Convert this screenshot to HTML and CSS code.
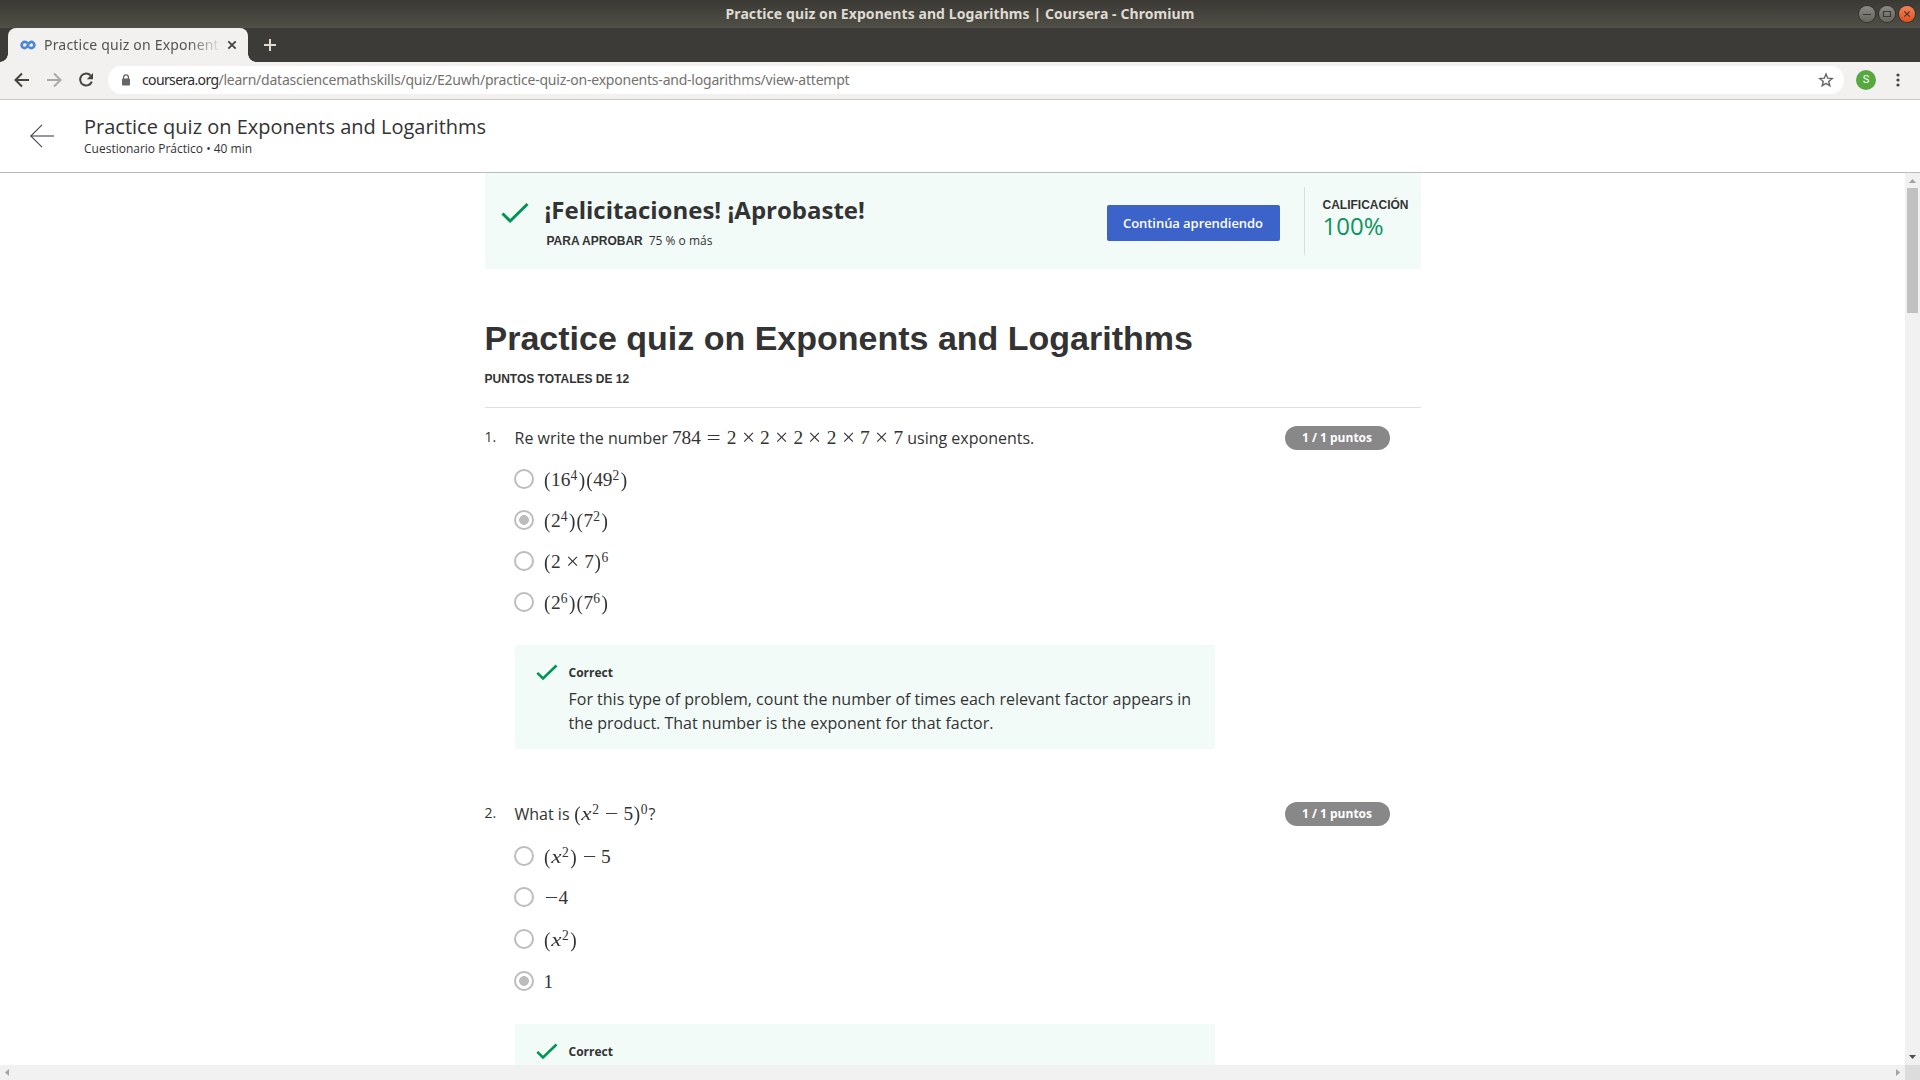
FILE: index.html
```html
<!DOCTYPE html>
<html lang="es">
<head>
<meta charset="utf-8">
<title>Practice quiz on Exponents and Logarithms | Coursera</title>
<link rel="stylesheet" href="styles.css">
</head>
<body>
<div class="window">
  <div class="titlebar">
    <span></span>
    <span class="window-title">Practice quiz on Exponents and Logarithms | Coursera - Chromium</span>
    <span class="window-buttons">
      <svg class="wbtn" viewBox="0 0 16 16"><path d="M4 8.5h8"/></svg>
      <svg class="wbtn" viewBox="0 0 16 16"><path d="M4.5 5.5h7v5h-7z"/></svg>
      <svg class="wbtn close" viewBox="0 0 16 16"><path d="M5.3 5.3l5.4 5.4M10.7 5.3l-5.4 5.4"/></svg>
    </span>
  </div>
  <div class="tabstrip">
    <div class="tab">
      <svg class="favicon" width="16" height="10" viewBox="0 0 16 10"><path d="M7.600 3.200C6.800 2.200 6 1.900 4.700 1.900a3.100 3.100 0 0 0 0 6.200C8 8.100 8 1.900 11.300 1.900a3.100 3.100 0 0 1 0 6.200C10 8.100 9.200 7.800 8.400 6.800"/></svg>
      <span class="tab-title">Practice quiz on Exponent</span>
      <svg class="tab-close" width="10" height="10" viewBox="0 0 10 10"><path d="M1.300 1.300l7.400 7.400M8.700 1.300l-7.400 7.400"/></svg>
    </div>
    <svg class="newtab" width="12" height="12" viewBox="0 0 12 12"><path d="M6 0v12M0 6h12"/></svg>
  </div>
  <div class="toolbar">
    <svg class="nav" width="24" height="24" viewBox="0 0 24 24"><path d="M19 12H6M12 5.500L5.500 12l6.500 6.500"/></svg>
    <svg class="nav off" width="24" height="24" viewBox="0 0 24 24"><path d="M5 12h13M12 5.500l6.500 6.500-6.500 6.500"/></svg>
    <svg class="nav" width="24" height="24" viewBox="0 0 24 24"><path d="M16.700 7.600A6 6 0 1 0 17.800 13.600"/><path class="solid" d="M19 5v6.200h-6.200z"/></svg>
    <div class="omnibox">
      <svg width="10" height="12" viewBox="0 0 10 12"><path d="M2.600 5V3.200a2.400 2.400 0 0 1 4.800 0V5" fill="none" stroke="#666" stroke-width="1.300"/><rect x="1" y="4.500" width="8" height="7" rx="1" fill="#666"/></svg>
      <span class="url"><b>coursera.org</b>/learn/datasciencemathskills/quiz/E2uwh/practice-quiz-on-exponents-and-logarithms/view-attempt</span>
      <svg width="16" height="16" viewBox="0 0 16 16"><path d="M8 2l1.700 4.200 4.500.3-3.500 2.900 1.100 4.400L8 11.400l-3.800 2.400 1.100-4.400-3.500-2.900 4.500-.3z" fill="none" stroke="#666" stroke-width="1.400"/></svg>
    </div>
    <span class="avatar">S</span>
    <svg width="4" height="14" viewBox="0 0 4 14" fill="#444"><circle cx="2" cy="2" r="1.600"/><circle cx="2" cy="7" r="1.600"/><circle cx="2" cy="12" r="1.600"/></svg>
  </div>

  <header class="page-header">
    <svg width="24" height="24" viewBox="0 0 24 24" fill="none" stroke="#45434f" stroke-width="1.100"><path d="M.800 12H24"/><path d="M12 .800L.800 12 12 23.200"/></svg>
    <div>
      <div class="page-title">Practice quiz on Exponents and Logarithms</div>
      <div class="page-sub">Cuestionario Práctico • 40 min</div>
    </div>
  </header>

  <div class="viewport">
    <main class="content">
      <section class="banner">
        <svg class="banner-check" width="28" height="22" viewBox="0 0 28 22"><path d="M1.500 11.500L9.200 19 26.500 2"/></svg>
        <div class="banner-text">
          <div class="congrats">¡Felicitaciones! ¡Aprobaste!</div>
          <div class="pass"><b class="caps">PARA APROBAR</b><span>75 % o más</span></div>
        </div>
        <span class="continue">Continúa aprendiendo</span>
        <div class="grade"><b class="caps">CALIFICACIÓN</b><span class="score">100%</span></div>
      </section>

      <h1>Practice quiz on Exponents and Logarithms</h1>
      <div class="caps total">PUNTOS TOTALES DE 12</div>

      <section class="question first">
        <span class="num">1.</span>
        <div class="body">
          <div class="prompt">Re write the number <span class="math">784<i class="rel">=</i>2<i class="op">×</i>2<i class="op">×</i>2<i class="op">×</i>2<i class="op">×</i>7<i class="op">×</i>7</span> using exponents.</div>
          <div class="option"><span class="radio"></span><span class="math"><i class="par">(</i>16<sup>4</sup><i class="par">)</i><i class="par">(</i>49<sup>2</sup><i class="par">)</i></span></div>
          <div class="option"><span class="radio on"></span><span class="math"><i class="par">(</i>2<sup>4</sup><i class="par">)</i><i class="par">(</i>7<sup>2</sup><i class="par">)</i></span></div>
          <div class="option"><span class="radio"></span><span class="math"><i class="par">(</i>2<i class="op">×</i>7<i class="par">)</i><sup>6</sup></span></div>
          <div class="option"><span class="radio"></span><span class="math"><i class="par">(</i>2<sup>6</sup><i class="par">)</i><i class="par">(</i>7<sup>6</sup><i class="par">)</i></span></div>
          <div class="feedback">
            <svg width="22" height="17" viewBox="0 0 22 17"><path d="M1.300 8.800L7 14.500 20.500 1.500"/></svg>
            <div><b>Correct</b><p>For this type of problem, count the number of times each relevant factor appears in the product. That number is the exponent for that factor.</p></div>
          </div>
        </div>
        <span class="badge">1 / 1 puntos</span>
      </section>

      <section class="question second">
        <span class="num">2.</span>
        <div class="body">
          <div class="prompt">What is <span class="math"><i class="par">(</i><i class="var">x</i><sup>2</sup><i class="op wide">−</i>5<i class="par">)</i><sup>0</sup></span>?</div>
          <div class="option"><span class="radio"></span><span class="math"><i class="par">(</i><i class="var">x</i><sup>2</sup><i class="par">)</i><i class="op wide">−</i>5</span></div>
          <div class="option"><span class="radio"></span><span class="math"><i class="neg">−</i>4</span></div>
          <div class="option"><span class="radio"></span><span class="math"><i class="par">(</i><i class="var">x</i><sup>2</sup><i class="par">)</i></span></div>
          <div class="option"><span class="radio on"></span><span class="math">1</span></div>
          <div class="feedback">
            <svg width="22" height="17" viewBox="0 0 22 17"><path d="M1.300 8.800L7 14.500 20.500 1.500"/></svg>
            <div><b>Correct</b></div>
          </div>
        </div>
        <span class="badge">1 / 1 puntos</span>
      </section>
    </main>
    <div class="vscroll">
      <svg width="15" height="15" viewBox="0 0 15 15"><path d="M4 10h7L7.500 6z" fill="#a3a3a3"/></svg>
      <div class="thumb"></div>
      <svg width="15" height="15" viewBox="0 0 15 15"><path d="M4 5h7L7.500 9z" fill="#505050"/></svg>
    </div>
  </div>
  <div class="hscroll">
    <svg width="15" height="15" viewBox="0 0 15 15"><path d="M9 4v7L5 7.500z" fill="#a3a3a3"/></svg>
    <svg width="15" height="15" viewBox="0 0 15 15"><path d="M6 4v7l4-3.500z" fill="#a3a3a3"/></svg>
    <span class="corner"></span>
  </div>
</div>
</body>
</html>
```
FILE: styles.css
```css
* { box-sizing: border-box; }
body { margin: 0; background: #fff; color: #333; font-family: "Open Sans", sans-serif; }
svg { display: block; flex: none; }
.window { width: 1920px; height: 1080px; display: flex; flex-direction: column; overflow: hidden; }

/* Window frame */
.titlebar { height: 28px; flex: none; display: grid; grid-template-columns: 1fr auto 1fr; align-items: center; background: linear-gradient(#3a3934, #504f47); color: #dfdbd2; }
.window-title { font: 700 14px/28px "Noto Sans", sans-serif; white-space: nowrap; letter-spacing: .08px; }
.window-buttons { display: flex; justify-content: flex-end; gap: 4px; padding-right: 5px; }
.wbtn { width: 16px; height: 16px; border-radius: 50%; background: linear-gradient(#8a8982, #66655f); box-shadow: 0 0 0 1px #34332f; fill: none; stroke: #3a3934; stroke-width: 1.2; }
.wbtn.close { background: linear-gradient(#f58259, #e34f1c); }
.tabstrip { height: 34px; flex: none; display: flex; align-items: center; gap: 16px; padding-left: 8px; background: #3d3b37; }
.tab { position: relative; width: 240px; height: 34px; display: flex; align-items: center; padding: 0 11px 0 12px; background: #f2f1f0; border-radius: 8px 8px 0 0; }
.tab::before, .tab::after { content: ""; position: absolute; bottom: 0; width: 8px; height: 8px; }
.tab::before { left: -8px; background: radial-gradient(circle at 0 0, transparent 7.500px, #f2f1f0 8px); }
.tab::after { right: -8px; background: radial-gradient(circle at 100% 0, transparent 7.500px, #f2f1f0 8px); }
.favicon { fill: none; stroke: #4a86d4; stroke-width: 2.600; }
.tab-title { width: 177px; margin: 0 7px 0 8px; white-space: nowrap; font: 14px/20px "Noto Sans", sans-serif; letter-spacing: .2px; color: #55534f; -webkit-mask-image: linear-gradient(90deg, #000 145px, transparent 178px); mask-image: linear-gradient(90deg, #000 145px, transparent 178px); }
.tab-close { stroke: #45443f; stroke-width: 1.800; }
.newtab { stroke: #dfdbd2; stroke-width: 2; }
.toolbar { height: 38px; flex: none; display: flex; align-items: center; padding: 0 20px 1px 10px; background: #f2f1f0; border-bottom: 1px solid #cbc8c3; }
.nav { margin-right: 8px; fill: none; stroke: #45443f; stroke-width: 2; }
.nav.off { stroke: #aaa9a6; }
.nav .solid { fill: #45443f; stroke: none; }
.omnibox { flex: 1; height: 28px; margin: 0 12px 0 2px; padding: 0 10px 0 13px; display: flex; align-items: center; background: #fff; border-radius: 14px; }
.url { flex: 1; margin-left: 11px; white-space: nowrap; font: 14px/20px "Noto Sans", sans-serif; letter-spacing: -.22px; color: #73726e; }
.url b { font-weight: 400; letter-spacing: -.640px; color: #2d2c2a; }
.avatar { width: 20px; height: 20px; margin-right: 20px; border-radius: 50%; background: #57a83f; color: #fff; font: 11px/20px Roboto, sans-serif; text-align: center; }

/* Page header */
.page-header { height: 73px; flex: none; display: flex; align-items: center; gap: 30px; padding: 0 30px; border-bottom: 1px solid #bbb; }
.page-title { margin-top: -1px; padding-bottom: 1px; font-size: 20px; line-height: 26px; }
.page-sub { font-size: 12px; line-height: 16px; }

/* Scrolling area */
.viewport { height: 892px; flex: none; display: flex; justify-content: space-between; overflow: hidden; }
.content { width: 936px; margin-left: 484.500px; }
.vscroll { width: 15px; display: flex; flex-direction: column; background: #f1f1f1; }
.thumb { height: 125px; margin: 0 2px; background: #c1c1c1; }
.vscroll svg:last-child { margin-top: auto; }
.hscroll { height: 15px; flex: none; display: flex; background: #f1f1f1; }
.hscroll svg:nth-child(2) { margin-left: auto; }
.corner { width: 15px; background: #dcdcdc; }

/* Result banner */
.caps { font: 700 12px/16px "Liberation Sans", sans-serif; }
.banner { height: 96px; display: flex; background: #f2fbf8; }
.banner-check { margin: 29px 16px 0; }
.banner-check path, .feedback path { fill: none; stroke: #009458; stroke-width: 3; }
.banner-text { flex: 1; padding-top: 19px; }
.congrats { font-size: 24px; font-weight: 700; line-height: 36px; }
.pass { display: flex; gap: 6px; padding: 4px 0 0 2px; font-size: 12px; line-height: 17px; }
.pass .caps { line-height: 18px; }
.continue { width: 173px; height: 36px; margin: 32px 24px 0 0; border-radius: 2px; background: #3c63c9; color: #fff; font-size: 13px; font-weight: 600; letter-spacing: -.06px; line-height: 36px; text-align: center; }
.grade { width: 117px; height: 68px; margin-top: 14px; padding: 10px 0 0 18px; border-left: 1px solid #ddd; display: flex; flex-direction: column; }
.score { color: #0d945e; font-size: 24px; line-height: 26px; }
h1 { margin: 48px 0 0; font: 700 34px/42px "Liberation Sans", sans-serif; white-space: nowrap; }
.total { height: 36px; margin-top: 12px; }

/* Questions */
.question { display: grid; grid-template-columns: 30px 770px 105px; }
.first { height: 376px; border-top: 1px solid #e0e0e0; padding-top: 18px; }
.second { padding-top: 19px; }
.num { font-size: 14px; line-height: 22px; }
.prompt { height: 32px; font-size: 16px; line-height: 24px; white-space: nowrap; }
.second .prompt { height: 33px; }
.option { height: 41px; display: flex; align-items: center; gap: 10px; margin-left: -1px; }
.second .option { height: 41.670px; }
.option .math { margin-top: 2px; }
.radio { width: 20px; height: 20px; flex: none; border: 2px solid #bdbdbd; border-radius: 50%; }
.radio.on { background: radial-gradient(circle, #bdbdbd 4.600px, transparent 5.200px); }
.badge { height: 24px; border-radius: 12px; background: #888; color: #fff; font-size: 12px; font-weight: 700; line-height: 24px; text-align: center; }
.feedback { width: 700px; height: 104px; margin-top: 23px; padding: 18px 20px 0 21px; display: flex; gap: 11px; background: #f2fbf8; }
.second .feedback { margin-top: 22px; }
.feedback svg { margin-top: 1px; }
.feedback path { stroke-width: 2.600; }
.feedback b { display: block; font-size: 12px; line-height: 20px; }
.feedback p { margin: 4px 0 0; font-size: 16px; line-height: 24px; }

/* Math */
.math { font: 19.360px/20px "Liberation Serif", serif; white-space: nowrap; }
.math i { display: inline-block; font-style: normal; text-align: center; }
.math .op { width: .778em; margin: 0 .222em; transform: scale(1.200); }
.math .rel { width: .778em; margin: 0 .278em; transform: scaleX(1.300); }
.math .op.wide { transform: scaleX(1.250); }
.math .neg { width: .778em; transform: scaleX(1.250); }
.math .par { width: .389em; transform: scaleY(1.130); }
.math .var { width: .572em; font-style: italic; transform: scaleX(1.200); }
.math sup { display: inline-block; width: .571em; font-size: .7em; line-height: 0; vertical-align: .440em; }
```
